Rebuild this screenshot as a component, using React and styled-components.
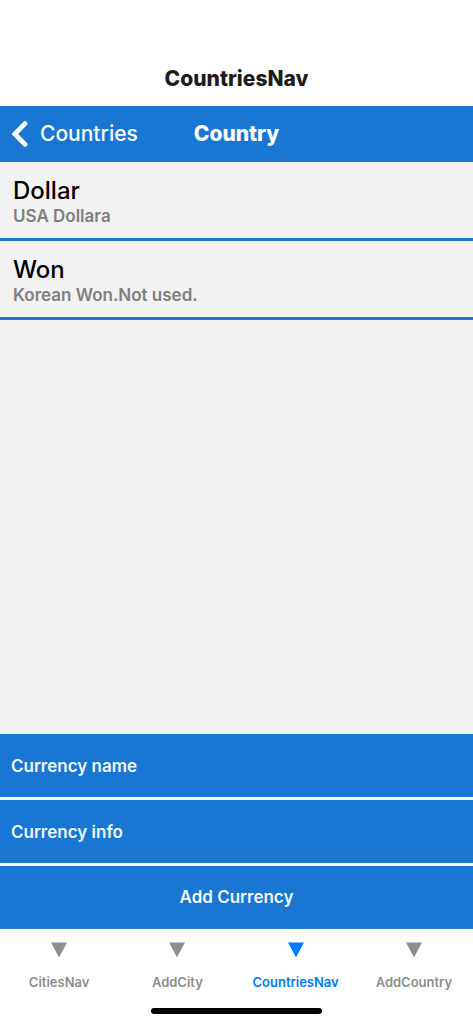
import React from "react";
import styled, { createGlobalStyle } from "styled-components";

const Global = createGlobalStyle`
  * { box-sizing: border-box; }
  body { margin: 0; font-family: Inter, "Liberation Sans", sans-serif; background: #fff; }
  button, input { font: inherit; }
  h1, h2, p, ul { margin: 0; padding: 0; }
`;
const blue = "#1976d2";

const Screen = styled.div`
  min-height: 100vh;
  display: flex;
  flex-direction: column;
`;
const TitleBar = styled.header`
  padding: 65px 16px 13px;
  text-align: center;
`;
const Title = styled.h1`
  font-size: 21px;
  line-height: 28px;
  font-weight: 800;
  color: #1c1c1e;
`;
const StackBar = styled.div`
  display: grid;
  grid-template-columns: 1fr auto 1fr;
  align-items: center;
  height: 56px;
  padding: 0 12px;
  background: ${blue};
  color: #fff;
`;
const BackButton = styled.button`
  display: flex;
  align-items: center;
  justify-self: start;
  gap: 12px;
  padding: 0;
  border: 0;
  background: none;
  color: inherit;
  font-size: 21px;
  font-weight: 500;
  line-height: 28px;
`;
const StackTitle = styled.h2`
  font-size: 21px;
  line-height: 28px;
  font-weight: 800;
`;
const Content = styled.main`
  flex: 1;
  display: flex;
  flex-direction: column;
  background: #f2f2f2;
`;
const CurrencyList = styled.ul`
  flex: 1;
  list-style: none;
`;
const CurrencyRow = styled.li`
  padding: 14px 13px 11px;
  border-bottom: 3px solid ${blue};
`;
const CurrencyName = styled.p`
  font-size: 24px;
  line-height: 30px;
  font-weight: 500;
  color: #000;
`;
const CurrencyInfo = styled.p`
  font-size: 17px;
  line-height: 21px;
  font-weight: 600;
  color: #808080;
`;
const Form = styled.form`
  display: flex;
  flex-direction: column;
  gap: 3px;
  background: #fff;
`;
const Field = styled.input`
  width: 100%;
  height: 63px;
  padding: 0 11px;
  border: 0;
  border-radius: 0;
  background: ${blue};
  color: #f0f8ff;
  font-size: 17px;
  font-weight: 600;
  &::placeholder { color: inherit; opacity: 1; }
`;
const Submit = styled.button`
  height: 63px;
  padding: 0 12px 1px;
  border: 0;
  background: ${blue};
  color: #f0f8ff;
  font-size: 17px;
  font-weight: 600;
`;
const TabBar = styled.nav`
  display: grid;
  grid-template-columns: repeat(4, 1fr);
  padding-top: 13px;
`;
const Tab = styled.a`
  display: flex;
  flex-direction: column;
  align-items: center;
  gap: 15px;
  color: ${(p) => (p.$active ? "#007aff" : "#8e8e8f")};
  font-size: 13px;
  line-height: 18px;
  font-weight: 600;
  text-decoration: none;
`;
const HomeArea = styled.footer`
  display: flex;
  justify-content: center;
  padding: 17px 0 10px;
`;
const HomeIndicator = styled.div`
  width: 36%;
  height: 6px;
  border-radius: 3px;
  background: #000;
`;

const currencies = [
  { name: "Dollar", info: "USA Dollara" },
  { name: "Won", info: "Korean Won.Not used." },
];
const tabs = ["CitiesNav", "AddCity", "CountriesNav", "AddCountry"];

export default function App() {
  return (
    <Screen>
      <Global />
      <TitleBar><Title>CountriesNav</Title></TitleBar>
      <StackBar>
        <BackButton type="button">
          <svg width="16" height="26" viewBox="0 0 16 26" fill="none" stroke="currentColor" strokeWidth="4.8" strokeLinecap="round" aria-hidden="true">
            <path d="M13 2.6 L2.8 13 L13 23.4" />
          </svg>
          Countries
        </BackButton>
        <StackTitle>Country</StackTitle>
      </StackBar>
      <Content>
        <CurrencyList>
          {currencies.map((c) => (
            <CurrencyRow key={c.name}>
              <CurrencyName>{c.name}</CurrencyName>
              <CurrencyInfo>{c.info}</CurrencyInfo>
            </CurrencyRow>
          ))}
        </CurrencyList>
        <Form onSubmit={(e) => e.preventDefault()}>
          <Field aria-label="Currency name" placeholder="Currency name" />
          <Field aria-label="Currency info" placeholder="Currency info" />
          <Submit type="submit">Add Currency</Submit>
        </Form>
      </Content>
      <TabBar>
        {tabs.map((t) => (
          <Tab key={t} href={"#" + t} $active={t === "CountriesNav"}>
            <svg width="16" height="16" viewBox="0 0 16 16" fill="currentColor" aria-hidden="true">
              <path d="M0 0.5H16L8 15.5Z" />
            </svg>
            {t}
          </Tab>
        ))}
      </TabBar>
      <HomeArea><HomeIndicator /></HomeArea>
    </Screen>
  );
}
